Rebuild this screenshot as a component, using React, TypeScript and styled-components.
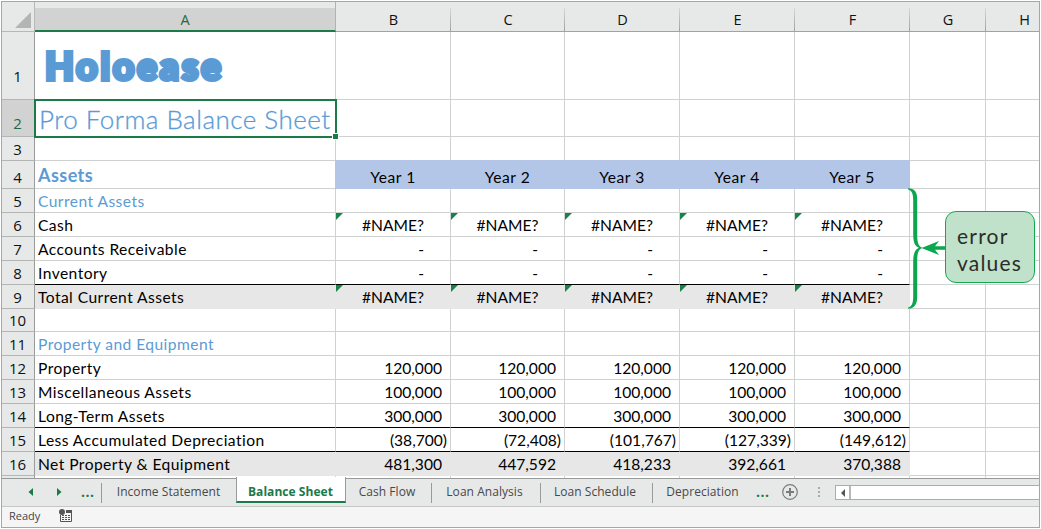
import React from "react";
import styled, { createGlobalStyle, css } from "styled-components";

const GREEN = "#1a7a48";
const BLUE = "#5b9bd5";
const GRID = "#d0d1d1";
const COLS = "33px 301px 115px 114px 115px 115px 115px 76px 1fr";

const Global = createGlobalStyle`
  * { box-sizing: border-box; }
  body { margin: 0; background: #fff; }
`;

const Page = styled.div`
  width: 1041px;
  height: 529px;
  padding: 1px;
  background: #fff;
  overflow: hidden;
`;

const Frame = styled.div`
  position: relative;
  display: flex;
  flex-direction: column;
  width: 1039px;
  height: 527px;
  border: 1px solid #a3a8a6;
  background: #fff;
  font-family: Lato, "Liberation Sans", sans-serif;
  color: #111;
`;

const HeaderRow = styled.div`
  display: grid;
  grid-template-columns: ${COLS};
  height: 30px;
  background: #e7e9e8;
`;

const ColHead = styled.div<{ $active?: boolean; $last?: boolean }>`
  display: flex;
  justify-content: center;
  padding: 9px 0 0 ${(p) => (p.$last ? 24 : 0)}px;
  border-bottom: 1px solid #a0a3a2;
  font: 14.5px/18px "Open Sans", "Noto Sans", sans-serif;
  background: ${(p) => (p.$last ? "none" : "linear-gradient(#d6d8d7, #9fa2a1) right bottom / 1px 23px no-repeat")};
  ${(p) =>
    p.$active &&
    css`
      color: #1e6b41;
      border-bottom: 2px solid ${GREEN};
      background: linear-gradient(#d2d2d2, #d2d2d2) left bottom / 100% 22px no-repeat;
      border-right: 1px solid #b0b2b1;
    `}
`;

const Corner = styled.div`
  display: flex;
  justify-content: flex-end;
  align-items: flex-end;
  padding: 0 3px 3px 0;
  border-bottom: 1px solid #b5b8b7;
  border-right: 1px solid #b5b8b7;
`;

const Sheet = styled.div`
  flex: none;
  height: 446px;
  overflow: hidden;
`;

const Row = styled.div<{ $h: number }>`
  display: grid;
  grid-template-columns: ${COLS};
  height: ${(p) => p.$h}px;
`;

const RowHead = styled.div<{ $active?: boolean; $lift?: number }>`
  display: flex;
  align-items: flex-end;
  justify-content: center;
  padding: 0 1px ${(p) => p.$lift ?? 1}px 0;
  border-right: 1px solid #999c9b;
  border-bottom: 1px solid #b3b6b5;
  background: ${(p) => (p.$active ? "#d2d2d2" : "#e7e9e8")};
  color: ${(p) => (p.$active ? "#1e6b41" : "#111")};
  font: 15px/20px "Open Sans", "Noto Sans", sans-serif;
`;

type Kind = "plain" | "fill" | "total";
const Cell = styled.div<{ $kind?: Kind; $rule?: boolean; $align?: string; $pad?: number }>`
  position: relative;
  display: flex;
  align-items: flex-end;
  justify-content: ${(p) => p.$align || "flex-start"};
  min-width: 0;
  padding: 0 ${(p) => p.$pad ?? 0}px 0 0;
  border-right: 1px solid ${GRID};
  border-bottom: 1px solid ${(p) => (p.$rule ? "#000" : GRID)};
  color: #000;
  font-size: 15.6px;
  line-height: 22px;
  white-space: nowrap;
  ${(p) =>
    p.$kind === "fill" &&
    css`
      background: #b4c6e7;
      border-color: #b4c6e7;
      box-shadow: -1px 0 #b4c6e7, 0 -1px #b4c6e7, -1px -1px #b4c6e7;
      letter-spacing: 0.55px;
    `}
  ${(p) =>
    p.$kind === "total" &&
    css`
      background: #e7e7e7;
      border-color: #e7e7e7;
    `}
`;

/* Columns past the last year keep plain gridlines; the outer one meets the frame. */
const EdgeCell = styled(Cell)`
  border-right: 0;
`;

const Label = styled.span<{ $tone?: string; $heading?: boolean }>`
  padding: 0 0 ${(p) => (p.$heading ? 2 : 0)}px 3px;
  color: ${(p) => p.$tone || "#000"};
  font-size: ${(p) => (p.$heading ? 18 : 15.6)}px;
  font-weight: ${(p) => (p.$heading ? 700 : 400)};
  letter-spacing: 0.44px;
`;

const Brand = styled.span`
  padding: 0 0 9px 10px;
  color: ${BLUE};
  font-size: 37.5px;
  font-weight: 900;
  line-height: 48px;
  letter-spacing: 2.7px;
  -webkit-text-stroke: 4px ${BLUE};
`;

const Title = styled.span`
  padding: 0 0 1px 4px;
  color: ${BLUE};
  font-size: 26px;
  font-weight: 300;
  line-height: 32px;
  letter-spacing: 0.48px;
  -webkit-text-stroke: 0.3px ${BLUE};
`;

const ErrorMark = styled.i`
  position: absolute;
  left: 0;
  top: 0;
  border-top: 7px solid #16834a;
  border-right: 7px solid transparent;
`;

const Selection = styled.div`
  position: absolute;
  left: 32px;
  top: 97px;
  width: 303px;
  height: 39px;
  border: 2px solid ${GREEN};
  &::after {
    content: "";
    position: absolute;
    right: -3px;
    bottom: -3px;
    width: 5px;
    height: 5px;
    background: ${GREEN};
    box-shadow: 0 0 0 1px #fff;
  }
`;

const Brace = styled.svg`
  position: absolute;
  left: 898px;
  top: 178px;
`;

const Callout = styled.div`
  position: absolute;
  left: 943px;
  top: 209px;
  width: 90px;
  height: 72px;
  padding: 10px 0 0 11px;
  border: 1px solid #17a84f;
  border-radius: 11px;
  background: #c0e2ca;
  color: #2b2b2b;
  font-size: 21px;
  line-height: 27px;
  letter-spacing: 1.2px;
`;

const TabBar = styled.div`
  display: flex;
  height: 29px;
  border-top: 1px solid #969b99;
  border-bottom: 1px solid #c6c6c6;
  background: #e7e9e8;
  font: 12px/25px "Open Sans", "Noto Sans", sans-serif;
  color: #484848;
`;

const NavGroup = styled.div`
  display: flex;
  align-items: center;
  width: 99px;
  padding: 0 0 2px 25px;
`;

const Dots = styled.span`
  color: ${GREEN};
  font-weight: 700;
  font-size: 14px;
  letter-spacing: 0.5px;
`;

const Tab = styled.div<{ $w: number; $sep?: boolean; $active?: boolean; $first?: boolean }>`
  position: relative;
  display: flex;
  justify-content: center;
  width: ${(p) => p.$w}px;
  padding-right: ${(p) => (p.$first ? 0 : 4)}px;
  white-space: nowrap;
  letter-spacing: 0.05px;
  background: ${(p) => (p.$sep ? "linear-gradient(#999, #999) right 4px / 1px 20px no-repeat" : "none")};
  ${(p) =>
    p.$first &&
    css`
      background: linear-gradient(#999, #999) left 4px / 1px 20px no-repeat;
    `}
  ${(p) =>
    p.$active &&
    css`
      height: 26px;
      margin-top: -2px;
      padding: 2px 1px 0 0;
      color: ${GREEN};
      font-weight: 700;
      background: #fff;
      border: 1px solid #999;
      border-top: 0;
      border-bottom: 2px solid ${GREEN};
    `}
`;

const ScrollBar = styled.div`
  display: flex;
  flex: 1;
  height: 15px;
  margin: 6px 0 0;
  border: 1px solid #ababab;
  border-right: 0;
  background: #fff;
`;

const ScrollButton = styled.div`
  display: flex;
  align-items: center;
  justify-content: center;
  width: 15px;
  border-right: 2px solid #b8b8b8;
`;

const StatusBar = styled.div`
  display: flex;
  align-items: center;
  flex: 1;
  gap: 19px;
  padding: 0 0 2px 7px;
  background: #f5f5f5;
  color: #444;
  font: 11px/18px "Open Sans", "Noto Sans", sans-serif;
`;

type Item = {
  n?: number;
  h: number;
  label?: string;
  tone?: string;
  heading?: boolean;
  values?: string[];
  kind?: Kind;
  rule?: boolean;
  lift?: number;
};

const rep = (v: string): string[] => Array(5).fill(v);

const ROWS: Item[] = [
  { n: 1, h: 68, lift: 13 },
  { n: 2, h: 37, lift: 3 },
  { n: 3, h: 24 },
  { n: 4, h: 28, label: "Assets", tone: BLUE, heading: true, values: ["Year 1", "Year 2", "Year 3", "Year 4", "Year 5"], kind: "fill" },
  { n: 5, h: 24, label: "Current Assets", tone: BLUE },
  { n: 6, h: 24, label: "Cash", values: rep("#NAME?") },
  { n: 7, h: 24, label: "Accounts Receivable", values: rep("-") },
  { n: 8, h: 24, label: "Inventory", values: rep("-"), rule: true },
  { n: 9, h: 24, label: "Total Current Assets", values: rep("#NAME?"), kind: "total" },
  { n: 10, h: 23 },
  { n: 11, h: 24, label: "Property and Equipment", tone: BLUE },
  { n: 12, h: 24, label: "Property", values: rep("120,000") },
  { n: 13, h: 24, label: "Miscellaneous Assets", values: rep("100,000") },
  { n: 14, h: 24, label: "Long-Term Assets", values: rep("300,000"), rule: true },
  { n: 15, h: 24, label: "Less Accumulated Depreciation", values: ["(38,700)", "(72,408)", "(101,767)", "(127,339)", "(149,612)"], rule: true },
  { n: 16, h: 24, label: "Net Property & Equipment", values: ["481,300", "447,592", "418,233", "392,661", "370,388"], kind: "total" },
  { h: 3 },
];

const placement = (v?: string): [string, number] => {
  if (!v || v.startsWith("#") || v.startsWith("Y")) return ["center", 0];
  if (v === "-") return ["flex-end", 26];
  return ["flex-end", v.startsWith("(") ? 3 : 8];
};

function SheetRow({ row }: { row: Item }) {
  const isTotal = row.kind === "total";
  return (
    <Row $h={row.h}>
      <RowHead $active={row.n === 2} $lift={row.lift}>
        {row.n}
      </RowHead>
      <Cell $kind={isTotal ? "total" : undefined} $rule={row.rule}>
        {row.n === 1 && <Brand>Holoease</Brand>}
        {row.n === 2 && <Title>Pro Forma Balance Sheet</Title>}
        {row.label && (
          <Label $tone={row.tone} $heading={row.heading}>
            {row.label}
          </Label>
        )}
      </Cell>
      {[0, 1, 2, 3, 4].map((i) => {
        const v = row.values?.[i];
        const [align, pad] = placement(v);
        return (
          <Cell key={i} $kind={row.kind} $rule={row.rule} $align={align} $pad={pad}>
            {v?.startsWith("#") && <ErrorMark />}
            {v}
          </Cell>
        );
      })}
      <Cell />
      <EdgeCell />
    </Row>
  );
}

export default function App() {
  return (
    <Page>
      <Global />
      <Frame>
        <HeaderRow>
          <Corner>
            <svg width="16" height="16">
              <path d="M16 0V16H0Z" fill="#b2b5b4" />
            </svg>
          </Corner>
          {["A", "B", "C", "D", "E", "F", "G", "H"].map((c) => (
            <ColHead key={c} $active={c === "A"} $last={c === "H"}>
              {c}
            </ColHead>
          ))}
        </HeaderRow>
        <Sheet>
          {ROWS.map((r, i) => (
            <SheetRow key={i} row={r} />
          ))}
        </Sheet>
        <TabBar>
          <NavGroup>
            <svg width="54" height="10" viewBox="0 0 54 10">
              <path d="M6 1V9L1.500 5ZM30 1V9L34.500 5Z" fill={GREEN} />
            </svg>
            <Dots>...</Dots>
          </NavGroup>
          <Tab $w={135} $first>
            Income Statement
          </Tab>
          <Tab $w={110} $active>
            Balance Sheet
          </Tab>
          <Tab $w={86} $sep>
            Cash Flow
          </Tab>
          <Tab $w={109} $sep>
            Loan Analysis
          </Tab>
          <Tab $w={112} $sep>
            Loan Schedule
          </Tab>
          <Tab $w={103}>Depreciation</Tab>
          <Dots>...</Dots>
          <svg width="66" height="26" viewBox="0 0 66 26" fill="none" stroke="#7b7b7b">
            <circle cx="21" cy="13" r="7.300" strokeWidth="1.200" />
            <path d="M17 13H25M21 9V17" strokeWidth="2" />
            <path d="M50 8V18" strokeWidth="2" strokeDasharray="2 2" stroke="#aaa" />
          </svg>
          <ScrollBar>
            <ScrollButton>
              <svg width="6" height="8">
                <path d="M5 0V8L1 4Z" fill="#555" />
              </svg>
            </ScrollButton>
          </ScrollBar>
        </TabBar>
        <StatusBar>
          Ready
          <svg width="14" height="14" viewBox="0 0 14 14" fill="none" stroke="#555">
            <path d="M12.500 2V12.500H1.500V6" />
            <path d="M7 2.500H13" strokeWidth="3" />
            <path d="M3 6.500H11M3 8.500H11M3 10.500H11" strokeDasharray="2 1" />
            <circle cx="3" cy="3" r="3" fill="#555" stroke="none" />
          </svg>
        </StatusBar>
        <Selection />
        <Brace width="48" height="134" viewBox="900 180 48 134" fill="#0aa650">
          <path d="M908 188.300C914.500 188.300 917.200 192 917.200 199V235C917.200 242.500 918.500 246.500 922.500 247.800C918.500 249.300 917.200 253 917.200 260V297C917.200 304.500 914 308.800 908 308.800V307.600C911.500 306.800 913.200 303.500 913.200 297V262C913.200 254 914.500 250 919 247.800C914.500 245.800 913.200 242 913.200 234V200C913.200 193.500 911.500 190.300 908 189.500Z" />
          <path d="M921.500 248L939 241L935 246.300H946V249.800H935L939 255Z" />
        </Brace>
        <Callout>
          error
          <br />
          values
        </Callout>
      </Frame>
    </Page>
  );
}
